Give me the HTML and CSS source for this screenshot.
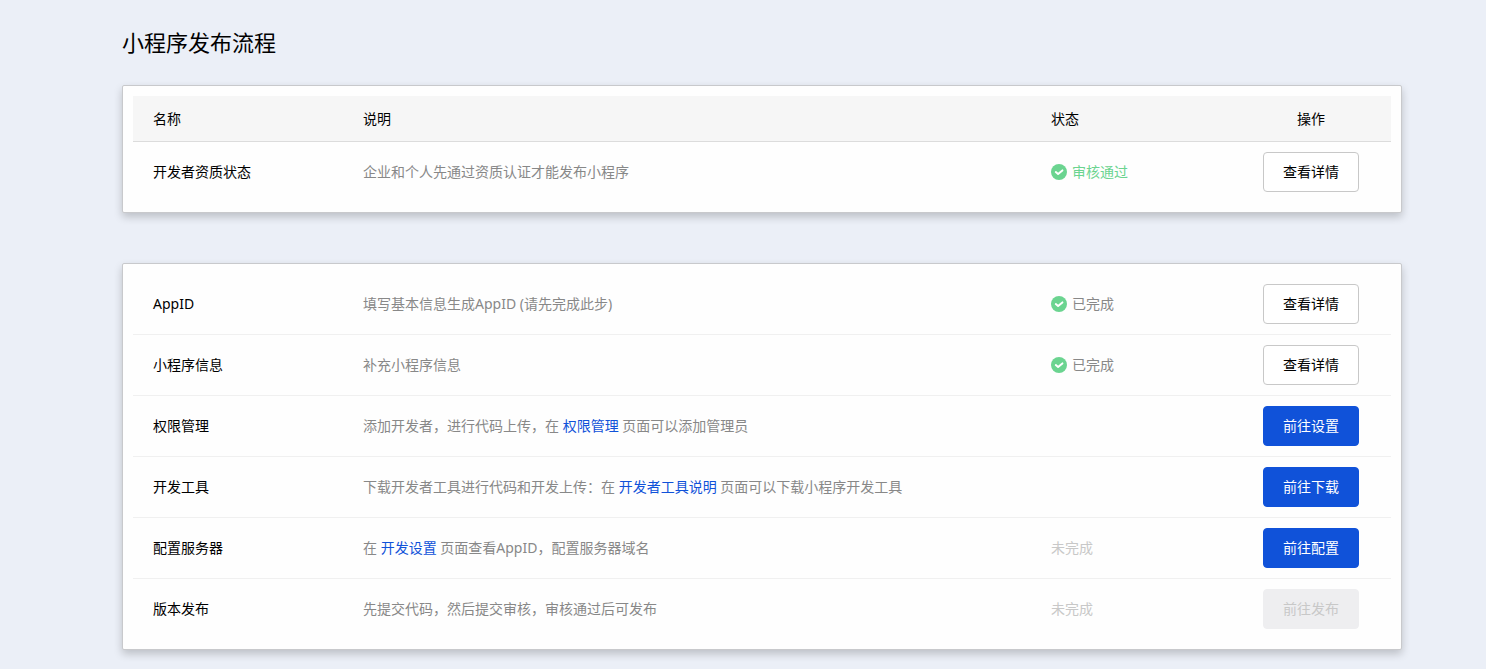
FILE: index.html
```html
<!DOCTYPE html>
<html lang="zh-CN">
<head>
<meta charset="utf-8">
<meta name="viewport" content="width=device-width, initial-scale=1">
<title>小程序发布流程</title>
<link rel="stylesheet" href="styles.css">
</head>
<body>
<svg class="sprite" aria-hidden="true">
  <symbol id="check" viewBox="0 0 16 16">
    <circle cx="8" cy="8" r="8" fill="#6bd490"/>
    <path d="M4.8 8.1 7.1 10 11.4 6.4" fill="none" stroke="#fff" stroke-width="2" stroke-linecap="round" stroke-linejoin="round"/>
  </symbol>
</svg>
<main class="page">
  <h1 class="title">小程序发布流程</h1>

  <section class="card">
    <table class="steps">
      <colgroup><col class="col-name"><col><col class="col-status"><col class="col-action"></colgroup>
      <thead>
        <tr><th scope="col">名称</th><th scope="col">说明</th><th scope="col">状态</th><th scope="col" class="action">操作</th></tr>
      </thead>
      <tbody>
        <tr>
          <th scope="row">开发者资质状态</th>
          <td>企业和个人先通过资质认证才能发布小程序</td>
          <td><span class="status passed"><svg class="icon" aria-hidden="true"><use href="#check"/></svg>审核通过</span></td>
          <td class="action"><button type="button" class="btn">查看详情</button></td>
        </tr>
      </tbody>
    </table>
  </section>

  <section class="card">
    <table class="steps">
      <colgroup><col class="col-name"><col><col class="col-status"><col class="col-action"></colgroup>
      <tbody>
        <tr>
          <th scope="row">AppID</th>
          <td>填写基本信息生成AppID (请先完成此步)</td>
          <td><span class="status"><svg class="icon" aria-hidden="true"><use href="#check"/></svg>已完成</span></td>
          <td class="action"><button type="button" class="btn">查看详情</button></td>
        </tr>
        <tr>
          <th scope="row">小程序信息</th>
          <td>补充小程序信息</td>
          <td><span class="status"><svg class="icon" aria-hidden="true"><use href="#check"/></svg>已完成</span></td>
          <td class="action"><button type="button" class="btn">查看详情</button></td>
        </tr>
        <tr>
          <th scope="row">权限管理</th>
          <td>添加开发者，进行代码上传，在 <a href="#">权限管理</a> 页面可以添加管理员</td>
          <td></td>
          <td class="action"><button type="button" class="btn primary">前往设置</button></td>
        </tr>
        <tr>
          <th scope="row">开发工具</th>
          <td>下载开发者工具进行代码和开发上传：在 <a href="#">开发者工具说明</a> 页面可以下载小程序开发工具</td>
          <td></td>
          <td class="action"><button type="button" class="btn primary">前往下载</button></td>
        </tr>
        <tr>
          <th scope="row">配置服务器</th>
          <td>在 <a href="#">开发设置</a> 页面查看AppID，配置服务器域名</td>
          <td><span class="status pending">未完成</span></td>
          <td class="action"><button type="button" class="btn primary">前往配置</button></td>
        </tr>
        <tr>
          <th scope="row">版本发布</th>
          <td>先提交代码，然后提交审核，审核通过后可发布</td>
          <td><span class="status pending">未完成</span></td>
          <td class="action"><button type="button" class="btn" disabled>前往发布</button></td>
        </tr>
      </tbody>
    </table>
  </section>
</main>
</body>
</html>
```
FILE: styles.css
```css
* {
  box-sizing: border-box;
}

body {
  margin: 0;
  background: #ebeff7;
  color: #000;
  font: 14px/20px "Noto Sans", "Noto Sans CJK SC", sans-serif;
}

.sprite {
  display: none;
}

.page {
  padding: 27px 84px 19px 122px;
}

.title {
  margin: 0 0 28px;
  font-size: 22px;
  line-height: 30px;
  font-weight: 400;
}

.card {
  padding: 10px;
  background: #fefefe;
  border: 1px solid #c8c9cc;
  border-radius: 2px;
  box-shadow: 0 4px 8px rgba(0, 0, 0, 0.2);
}

.card + .card {
  margin-top: 50px;
}

.steps {
  width: 100%;
  table-layout: fixed;
  border-spacing: 0;
}

.col-name {
  width: 210px;
}

.col-status {
  width: 200px;
}

.col-action {
  width: 160px;
}

.steps th,
.steps td {
  padding: 10px 20px;
  text-align: left;
  vertical-align: middle;
  font-weight: 400;
}

.steps td {
  color: #888;
}

.steps thead th {
  height: 46px;
  background: #f6f6f6;
  border-bottom: 1px solid #dcdcdc;
}

.steps tbody tr + tr > * {
  border-top: 1px solid #f0f0f0;
}

.steps .action {
  text-align: center;
}

.steps a {
  color: #1052d9;
  text-decoration: none;
}

.status {
  display: flex;
  align-items: center;
  gap: 5px;
}

.passed {
  color: #6bd490;
}

.pending {
  color: #c8c8c8;
}

.icon {
  width: 16px;
  height: 16px;
}

.btn {
  display: block;
  height: 40px;
  margin: 0 auto;
  padding: 0 19px;
  border: 1px solid #c8c8c8;
  border-radius: 4px;
  background: #fff;
  color: #000;
  font: inherit;
  white-space: nowrap;
}

.btn.primary {
  border-color: #1052d9;
  background: #1052d9;
  color: #fff;
}

.btn:disabled {
  border-color: #eeeef0;
  background: #eeeef0;
  color: #c8c8c8;
}
```
